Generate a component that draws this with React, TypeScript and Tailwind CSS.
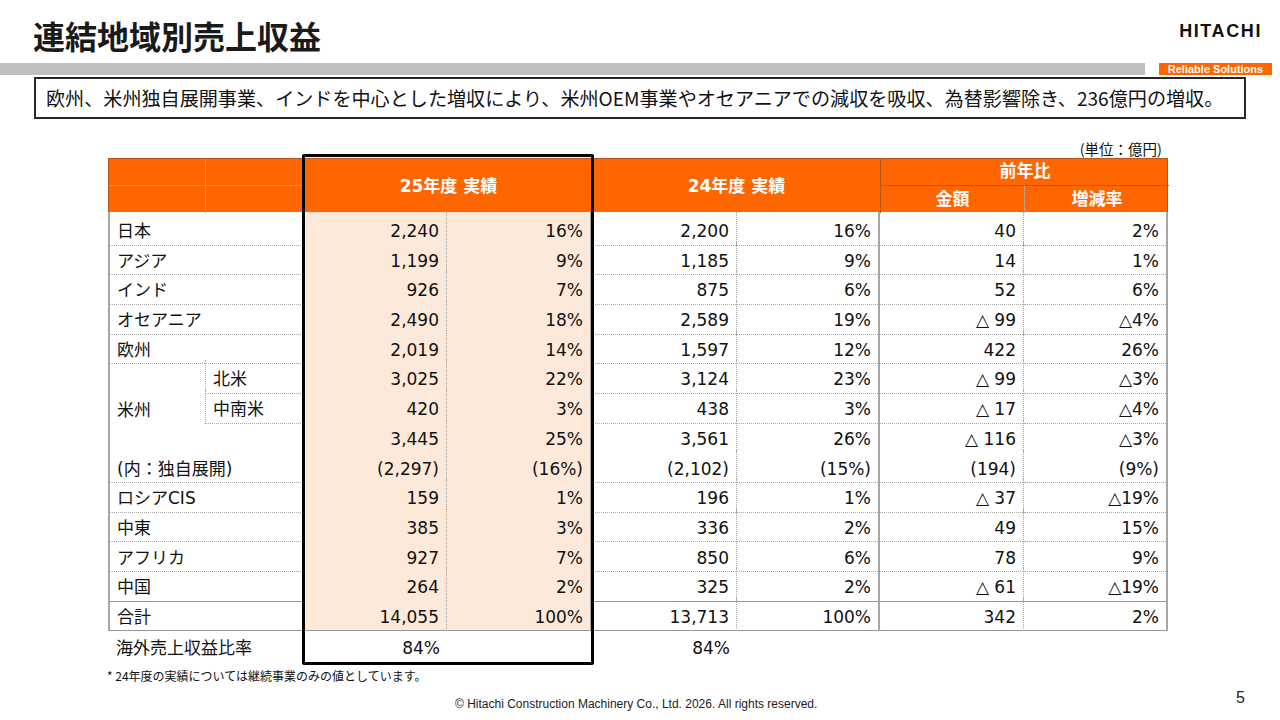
import React from 'react';

type Line = 'dot' | 'solid' | 'none';

interface RowData {
  label: string;
  sub?: string;
  vals: string[];
  bottom: Line;
  labelBottom?: Line;
}

const rows: RowData[] = [
  { label: '日本', vals: ['2,240', '16%', '2,200', '16%', '40', '2%'], bottom: 'dot' },
  { label: 'アジア', vals: ['1,199', '9%', '1,185', '9%', '14', '1%'], bottom: 'dot' },
  { label: 'インド', vals: ['926', '7%', '875', '6%', '52', '6%'], bottom: 'dot' },
  { label: 'オセアニア', vals: ['2,490', '18%', '2,589', '19%', '△ 99', '△4%'], bottom: 'dot' },
  { label: '欧州', vals: ['2,019', '14%', '1,597', '12%', '422', '26%'], bottom: 'dot' },
  { label: '', sub: '北米', vals: ['3,025', '22%', '3,124', '23%', '△ 99', '△3%'], bottom: 'dot', labelBottom: 'none' },
  { label: '米州', sub: '中南米', vals: ['420', '3%', '438', '3%', '△ 17', '△4%'], bottom: 'dot', labelBottom: 'none' },
  { label: '', vals: ['3,445', '25%', '3,561', '26%', '△ 116', '△3%'], bottom: 'none' },
  { label: '(内：独自展開)', vals: ['(2,297)', '(16%)', '(2,102)', '(15%)', '(194)', '(9%)'], bottom: 'dot' },
  { label: 'ロシアCIS', vals: ['159', '1%', '196', '1%', '△ 37', '△19%'], bottom: 'dot' },
  { label: '中東', vals: ['385', '3%', '336', '2%', '49', '15%'], bottom: 'dot' },
  { label: 'アフリカ', vals: ['927', '7%', '850', '6%', '78', '9%'], bottom: 'dot' },
  { label: '中国', vals: ['264', '2%', '325', '2%', '△ 61', '△19%'], bottom: 'solid' },
  { label: '合計', vals: ['14,055', '100%', '13,713', '100%', '342', '2%'], bottom: 'solid' },
];

// vertical line on the right of each value column
const RIGHT = [
  'border-r border-dotted border-[#a6a6a6]',
  'border-r-2 border-[#a6a6a6]',
  'border-r border-dotted border-[#a6a6a6]',
  'border-r-2 border-[#a6a6a6]',
  'border-r border-dotted border-[#a6a6a6]',
  'border-r-2 border-[#a6a6a6]',
];

const BOTTOM: Record<Line, string> = {
  dot: 'border-b border-dotted border-[#a6a6a6]',
  solid: 'border-b border-[#969696]',
  none: '',
};

const COLS = 'grid grid-cols-[97px_98px_144px_145px_145px_143px_144px_144px]';

function Cell({
  children,
  outer = '',
  bottom = 'dot',
  left = false,
}: {
  children?: React.ReactNode;
  outer?: string;
  bottom?: Line;
  left?: boolean;
}) {
  return (
    <div className={`h-full ${outer}`}>
      <div
        className={`h-full flex items-center pt-[7px] ${BOTTOM[bottom]} ${
          left ? 'justify-start pl-[7px]' : 'justify-end pr-[7px]'
        }`}
      >
        {children}
      </div>
    </div>
  );
}

function BodyRow({ r }: { r: RowData }) {
  return (
    <div className={`${COLS} h-[29.7px]`}>
      {r.sub !== undefined ? (
        <>
          <Cell outer="border-l-2 border-[#a6a6a6]" bottom={r.labelBottom} left>
            {r.label}
          </Cell>
          <Cell outer="border-l border-dotted border-[#a6a6a6]" bottom={r.bottom} left>
            {r.sub}
          </Cell>
        </>
      ) : (
        <Cell outer="col-span-2 border-l-2 border-[#a6a6a6]" bottom={r.bottom} left>
          {r.label}
        </Cell>
      )}
      {r.vals.map((v, i) => (
        <Cell key={i} outer={`${RIGHT[i]} ${i < 2 ? 'bg-[#FDE9D9]' : ''}`} bottom={r.bottom}>
          {v}
        </Cell>
      ))}
    </div>
  );
}

function Header() {
  return (
    <div
      className={`${COLS} grid-rows-[27px_27px] h-[54px] bg-[#FF6600] border-t border-x border-[#B5561C] text-white font-bold text-[17px]`}
    >
      <div className="col-start-1 row-start-1 border-r border-b border-[#FF8A40]" />
      <div className="col-start-2 row-start-1 border-b border-[#FF8A40]" />
      <div className="col-start-1 row-start-2 border-r border-[#FF8A40]" />
      <div className="col-start-2 row-start-2" />
      <div className="col-start-3 col-span-2 row-start-1 row-span-2 flex items-center justify-center pt-[1px]">
        25年度 実績
      </div>
      <div className="col-start-5 col-span-2 row-start-1 row-span-2 flex items-center justify-center pt-[1px] border-r border-[#B5561C]">
        24年度 実績
      </div>
      <div className="col-start-7 col-span-2 row-start-1 flex items-center justify-center border-b border-[#B5561C]">
        前年比
      </div>
      <div className="col-start-7 row-start-2 flex items-center justify-center border-r border-dotted border-[#d9b8a0]">
        金額
      </div>
      <div className="col-start-8 row-start-2 flex items-center justify-center">増減率</div>
    </div>
  );
}

export default function App() {
  return (
    <div className="w-[1280px] h-[720px] bg-white overflow-hidden flex flex-col text-[#111] font-['Noto_Sans_CJK_JP',sans-serif]">
      {/* title */}
      <div className="h-[63px] flex justify-between">
        <div className="pl-[33px] pt-[16px] text-[32px] leading-[38px] font-bold text-[#1a1a1a]">
          連結地域別売上収益
        </div>
        <div className="pr-[18px] pt-[21px] text-[18px] leading-[20px] font-bold tracking-[1.6px] text-[#111] font-['Liberation_Sans',sans-serif]">
          HITACHI
        </div>
      </div>

      {/* band */}
      <div className="h-[12px] flex">
        <div className="w-[1145px] bg-[#BFBFBF]" />
        <div className="ml-[14px] w-[113px] h-[12px] overflow-hidden bg-[#FF6600] text-white text-[11px] leading-[12px] font-bold flex justify-center font-['Liberation_Sans',sans-serif]">
          Reliable Solutions
        </div>
      </div>

      {/* summary */}
      <div className="mt-[2px] ml-[34px] w-[1212px] h-[42px] border-2 border-[#262626] flex items-center pl-[10px] pt-[1px] text-[19.1px] whitespace-nowrap text-[#111]">
        欧州、米州独自展開事業、インドを中心とした増収により、米州OEM事業やオセアニアでの減収を吸収、為替影響除き、236億円の増収。
      </div>

      {/* unit */}
      <div className="h-[39px] flex justify-end items-end pr-[118px] pb-[0px] text-[14.5px] leading-[18px]">
        (単位：億円)
      </div>

      {/* table */}
      <div className="ml-[108px] w-[1060px] relative text-[17px] font-['DejaVu_Sans','Noto_Sans_CJK_JP',sans-serif]">
        <Header />
        {rows.map((r, i) => (
          <BodyRow key={i} r={r} />
        ))}
        <div className={`${COLS} h-[35px]`}>
          <div className="col-span-2 flex items-center pl-[8px] pt-[8px]">海外売上収益比率</div>
          <div className="flex items-center justify-end pr-[7px] pt-[8px]">84%</div>
          <div />
          <div className="flex items-center justify-end pr-[7px] pt-[8px]">84%</div>
        </div>
        <div className="absolute left-[194px] top-[-4px] w-[292px] h-[511px] border-[3px] border-black rounded-[2px] pointer-events-none" />
      </div>

      {/* footnote */}
      <div className="ml-[107px] mt-[5px] text-[12px] leading-[16px]">
        *&nbsp;24年度の実績については継続事業のみの値としています。
      </div>

      {/* footer */}
      <div className="flex">
        <div className="w-[455px]" />
        <div className="pt-[12px] text-[12px] leading-[16px] text-[#222] font-['Liberation_Sans',sans-serif]">
          © Hitachi Construction Machinery Co., Ltd. 2026. All rights reserved.
        </div>
        <div className="flex-1" />
        <div className="pt-[6px] pr-[35px] text-[16px] leading-[16px] text-[#222] font-['Liberation_Sans',sans-serif]">
          5
        </div>
      </div>
    </div>
  );
}
